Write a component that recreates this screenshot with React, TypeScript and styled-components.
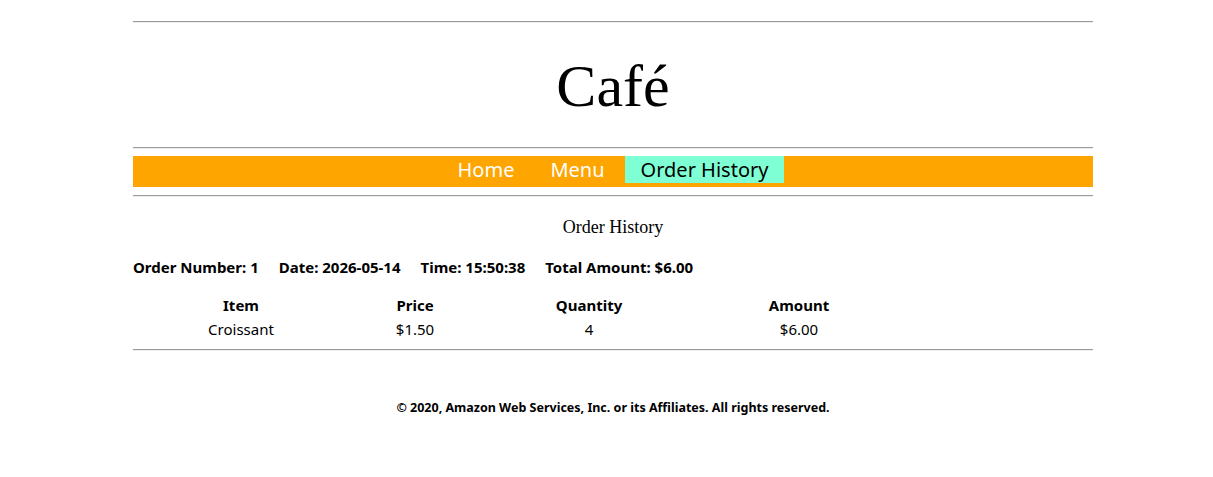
import React from "react";
import styled, { createGlobalStyle } from "styled-components";

const GlobalStyle = createGlobalStyle`
  html, body {
    margin: 0;
    padding: 0;
    background: #ffffff;
  }
  body {
    font-family: "Noto Sans", "Open Sans", sans-serif;
    color: #000;
  }
`;

const Page = styled.div`
  width: 960px;
  margin-left: 133px;
  padding-top: 21px;
  padding-bottom: 40px;
`;

const Rule = styled.hr<{ $gapTop?: number }>`
  display: block;
  height: 0;
  margin: ${(p) => p.$gapTop ?? 0}px 0 0 0;
  border: 0;
  border-top: 1px solid #9a9a9a;
  border-bottom: 1px solid #eeeeee;
`;

const Header = styled.header`
  padding: 31px 0 29px;
  text-align: center;
`;

const Title = styled.h1`
  margin: 0;
  font-family: "Liberation Serif", "Times New Roman", serif;
  font-weight: 400;
  font-size: 60px;
  line-height: 64px;
`;

const Nav = styled.nav`
  margin-top: 7px;
  height: 31px;
  background: #ffa500;
  display: flex;
  justify-content: center;
  align-items: flex-start;
  gap: 4px;
`;

const NavLink = styled.a<{ $active?: boolean }>`
  display: block;
  padding: 0 16px;
  font-family: "Noto Sans", "Open Sans", sans-serif;
  font-size: 20px;
  line-height: 27px;
  text-decoration: none;
  color: ${(p) => (p.$active ? "#000000" : "#ffffff")};
  background: ${(p) => (p.$active ? "#7fffd4" : "transparent")};
  cursor: pointer;
`;

const SectionTitle = styled.h2`
  margin: 20px 0 0;
  text-align: center;
  font-family: "Liberation Serif", "Times New Roman", serif;
  font-weight: 400;
  font-size: 18px;
  line-height: 21px;
`;

const OrderInfo = styled.div`
  margin-top: 19px;
  display: flex;
  gap: 20px;
  font-size: 15px;
  font-weight: 700;
  line-height: 20px;
`;

const Table = styled.div`
  margin-top: 16px;
  display: grid;
  grid-template-columns: 216px 132px 216px 204px;
`;

const Cell = styled.div<{ $head?: boolean }>`
  padding: ${(p) => (p.$head ? "2px 0 1px" : "3px 0 0")};
  text-align: center;
  font-size: 15px;
  line-height: 20px;
  font-weight: ${(p) => (p.$head ? 700 : 400)};
`;

const Footer = styled.footer`
  margin-top: 48px;
  text-align: center;
  font-size: 12.5px;
  font-weight: 700;
  line-height: 17px;
`;

const items = [{ name: "Croissant", price: "$1.50", qty: "4", amount: "$6.00" }];

export default function App() {
  return (
    <>
      <GlobalStyle />
      <Page>
        <Rule />
        <Header>
          <Title>Café</Title>
        </Header>
        <Rule />
        <Nav>
          <NavLink>Home</NavLink>
          <NavLink>Menu</NavLink>
          <NavLink $active>Order History</NavLink>
        </Nav>
        <Rule $gapTop={8} />
        <SectionTitle>Order History</SectionTitle>
        <OrderInfo>
          <span>Order Number: 1</span>
          <span>Date: 2026-05-14</span>
          <span>Time: 15:50:38</span>
          <span>Total Amount: $6.00</span>
        </OrderInfo>
        <Table>
          <Cell $head>Item</Cell>
          <Cell $head>Price</Cell>
          <Cell $head>Quantity</Cell>
          <Cell $head>Amount</Cell>
          {items.map((it) => (
            <React.Fragment key={it.name}>
              <Cell>{it.name}</Cell>
              <Cell>{it.price}</Cell>
              <Cell>{it.qty}</Cell>
              <Cell>{it.amount}</Cell>
            </React.Fragment>
          ))}
        </Table>
        <Rule $gapTop={10} />
        <Footer>© 2020, Amazon Web Services, Inc. or its Affiliates. All rights reserved.</Footer>
      </Page>
    </>
  );
}
